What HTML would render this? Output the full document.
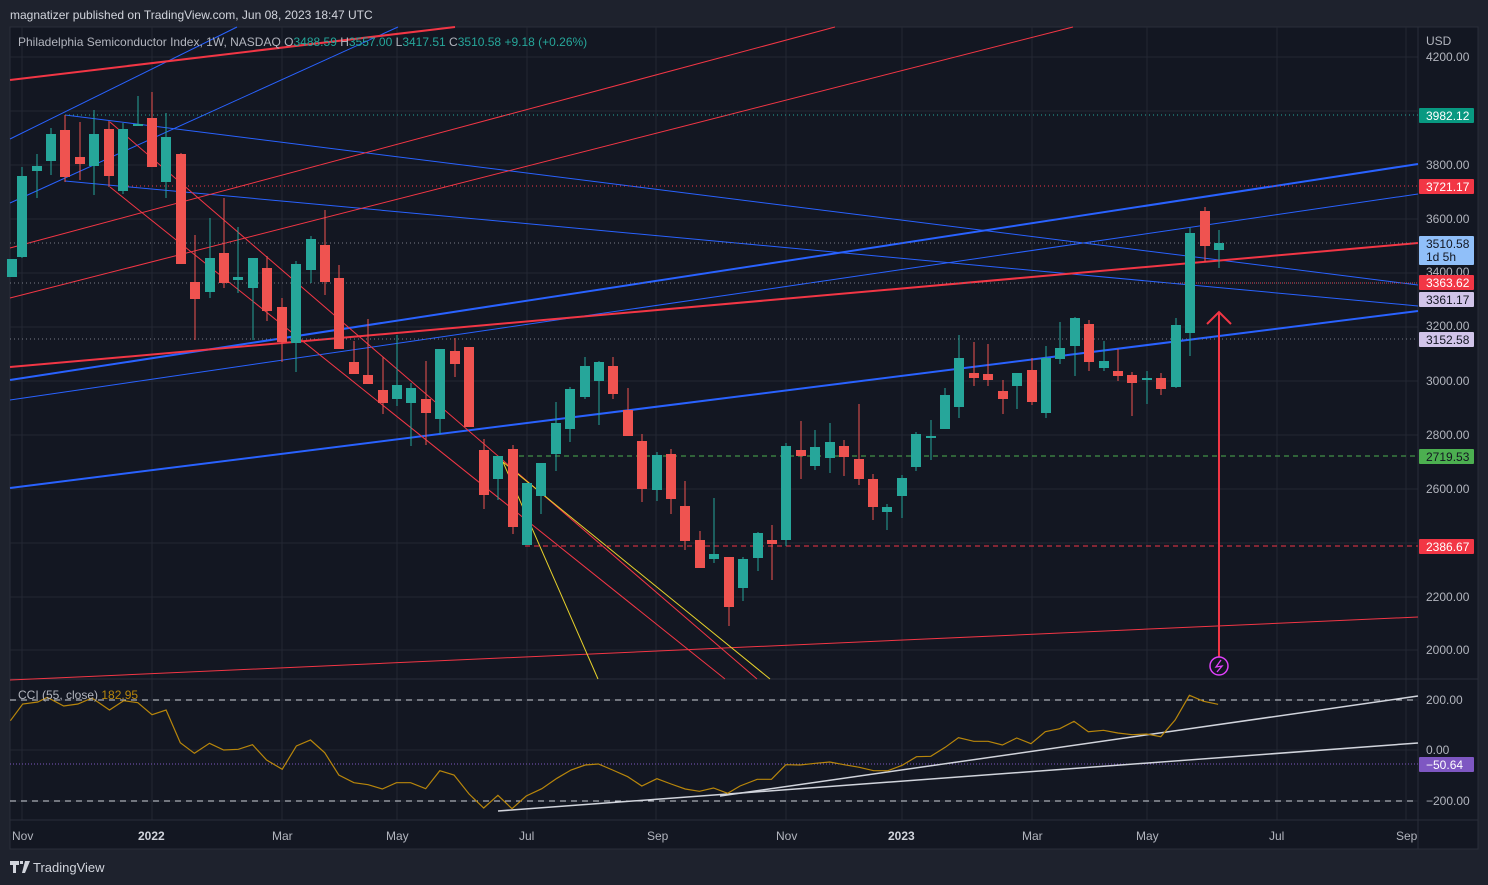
<!DOCTYPE html>
<html><head><meta charset="utf-8"><style>
html,body{margin:0;padding:0;background:#1e222d;width:1488px;height:885px;overflow:hidden;font-family:"Liberation Sans",sans-serif}
svg{position:absolute;left:0;top:0}
</style></head><body>
<svg id="s" width="1488" height="885" xmlns="http://www.w3.org/2000/svg" font-family="Liberation Sans, sans-serif">
<rect x="0" y="0" width="1488" height="885" fill="#1e222d"/>
<text x="10" y="19" fill="#d1d4dc" font-size="12">magnatizer published on TradingView.com, Jun 08, 2023 18:47 UTC</text>
<rect x="10" y="27" width="1468" height="822" fill="#131722" stroke="#2a2e39"/>
<g id="grid" stroke="#232733" stroke-width="1"></g>
<line x1="1418" y1="27" x2="1418" y2="849" stroke="#2a2e39"/>
<line x1="10" y1="679" x2="1478" y2="679" stroke="#2a2e39"/>
<line x1="10" y1="820" x2="1478" y2="820" stroke="#2a2e39"/>
<g id="lines" fill="none"></g>
<g id="candles"></g>
<g id="cci" fill="none"></g>
<g id="labels" font-size="12"></g>
<text x="18" y="46" fill="#b2b5be" font-size="12">Philadelphia Semiconductor Index, 1W, NASDAQ <tspan fill="#b2b5be">O</tspan><tspan fill="#26a69a">3488.59</tspan> <tspan fill="#b2b5be">H</tspan><tspan fill="#26a69a">3557.00</tspan> <tspan fill="#b2b5be">L</tspan><tspan fill="#26a69a">3417.51</tspan> <tspan fill="#b2b5be">C</tspan><tspan fill="#26a69a">3510.58</tspan> <tspan fill="#26a69a">+9.18 (+0.26%)</tspan></text>
<text x="18" y="699" fill="#b2b5be" font-size="12">CCI (55, close) <tspan fill="#b8860b">182.95</tspan></text>
<g transform="translate(10,860)" fill="#d1d4dc"><path d="M0 1h9v4H6v8H3V5H0z M10 1h3v3h-3z M15 1h5l-5 12h-3z"/></g>
<text x="33" y="872" fill="#d1d4dc" font-size="13">TradingView</text>
</svg>
<script>
var NS="http://www.w3.org/2000/svg";
function el(p,t,a){var e=document.createElementNS(NS,t);for(var k in a)e.setAttribute(k,a[k]);document.getElementById(p).appendChild(e);return e;}
[57,111,165,219,273,327,381,435,489,543,597,650,700,750,801].forEach(function(y){el('grid','line',{x1:10,y1:y,x2:1418,y2:y});});
[22,152,282,397,527,656,786,902,1032,1147,1277,1406].forEach(function(x){el('grid','line',{x1:x,y1:27,x2:x,y2:820});});
function L(x1,y1,x2,y2,c,w,d){var a={x1:x1,y1:y1,x2:x2,y2:y2,stroke:c,'stroke-width':w};if(d)a['stroke-dasharray']=d;el('lines','line',a);}
var B="#2962ff",R="#f23645";
L(10,488,1418,311,B,2);L(10,380,1418,164,B,2);L(10,400,1418,194,B,1);
L(10,139,237,27,B,1);L(10,203,398,27,B,1);
L(65,115,1418,285,B,1);L(65,181,1418,306,B,1);
L(10,367,1418,243,R,2);L(10,80,455,27,R,2);
L(10,248,835,27,R,1);L(10,298,1073,27,R,1);L(10,680,1418,617,R,1);
L(110,122,757,679,R,1);L(110,187,725,679,R,1);
L(503,462,770,679,"#e8d22b",1);L(503,462,598,679,"#e8d22b",1);
L(65,115,1418,115,"#26a69a",1,"1 3");L(120,186,1418,186,R,1,"1 3");
L(10,243,1418,243,"#787b86",1,"1 3");L(10,283,1418,283,"#787b86",1,"1 3");L(1180,283,1418,283,R,1,"1 3");L(10,339,1418,339,"#787b86",1,"1 3");
L(510,456,1418,456,"#4caf50",1,"5 4");L(525,546,1418,546,R,1,"5 4");
L(1219,313,1219,657,"#f23645",2);
el('lines','path',{d:"M1207 324 L1219 312 L1231 324",stroke:"#f23645","stroke-width":2});
el('lines','circle',{cx:1219,cy:666,r:9,stroke:"#e040fb","stroke-width":1.5});
el('lines','path',{d:"M1221 660 L1216 667 L1222 666 L1217 672",stroke:"#e040fb","stroke-width":1.3});
var C=[[12,259,277,259,277,1],[22,176,257,167,258,1],[37,166,171,154,198,1],[51,134,161,128,175,1],[65,130,177,115,182,0],[80,157,164,122,180,0],[94,134,166,110,195,1],[109,129,176,121,187,0],[123,129,191,123,194,1],[138,124,126,96,126,1],[152,118,167,92,167,0],[166,137,182,113,198,1],[181,154,264,153,264,0],[195,282,299,235,340,0],[210,258,292,218,298,1],[224,253,283,198,288,0],[238,277,280,227,293,1],[253,258,288,258,340,1],[267,268,311,256,321,0],[282,307,342,298,362,0],[296,264,343,261,372,1],[311,239,270,236,283,1],[325,245,282,210,295,0],[339,278,349,265,349,0],[354,362,374,341,374,0],[368,375,384,319,384,0],[383,390,403,357,414,0],[397,385,399,335,406,1],[411,388,403,383,446,1],[426,399,413,361,445,0],[440,349,419,349,434,1],[455,351,364,338,377,0],[469,347,427,347,427,0],[484,450,495,439,509,0],[498,456,479,456,500,1],[513,449,527,445,534,0],[527,483,545,483,545,1],[541,463,496,463,514,1],[556,423,454,402,471,1],[570,389,429,387,442,1],[585,366,397,357,399,1],[599,362,381,361,425,1],[613,366,394,357,399,0],[628,410,436,388,436,0],[642,441,489,434,502,0],[657,455,490,452,501,1],[671,454,499,449,514,0],[685,506,541,481,550,0],[700,540,568,531,568,0],[714,554,559,498,563,1],[729,557,607,557,626,0],[743,559,588,557,601,1],[758,533,558,532,571,1],[772,540,544,525,580,0],[786,446,540,443,546,1],[801,450,456,421,479,0],[815,447,466,430,470,1],[830,442,458,423,473,1],[844,446,457,440,476,0],[859,459,479,404,485,0],[873,479,507,474,520,0],[887,507,512,504,530,1],[902,478,496,475,518,1],[916,434,467,432,471,1],[931,436,438,420,460,1],[945,395,429,388,429,1],[959,358,407,335,418,1],[974,373,378,342,386,0],[988,374,380,344,386,0],[1003,391,399,380,414,0],[1017,373,386,373,409,1],[1032,370,402,358,405,0],[1046,358,413,346,418,1],[1060,348,359,322,364,1],[1075,318,346,317,376,1],[1089,324,362,320,371,0],[1104,361,368,341,371,1],[1118,371,376,349,381,0],[1132,375,383,372,416,0],[1147,378,379,371,404,1],[1161,378,389,373,395,0],[1176,325,387,318,388,1],[1190,233,333,228,356,1],[1205,211,246,207,262,0],[1219,243,250,230,268,1]];
C.forEach(function(c){var col=c[5]?"#26a69a":"#ef5350";
el('candles','line',{x1:c[0],y1:c[3],x2:c[0],y2:c[4],stroke:col,'stroke-width':1});
var h=Math.max(2,c[2]-c[1]);el('candles','rect',{x:c[0]-5,y:c[1],width:10,height:h,fill:col});});
L(10,700,1418,700,"#d1d4dc",1,"6 5");L(10,801,1418,801,"#d1d4dc",1,"6 5");L(10,764,1418,764,"#7e57c2",1,"1 2");
var p1=[[22,122],[48,72],[80,66],[100,52],[135,78],[165,72],[195,54],[232,90],[262,62],[292,68],[322,104],[352,90],[382,188],[412,220],[444,190],[474,210],[505,208],[535,194],[565,240],[598,268],[628,198],[658,180],[688,218],[718,285],[750,308],[780,314],[810,327],[840,308],[870,308],[902,326],[932,272],[962,285],[994,342],[1025,384],[1055,346],[1085,386],[1115,348],[1148,326],[1180,295],[1210,270],[1240,255],[1268,252],[1298,270],[1330,290],[1360,318],[1392,296],[1422,312],[1452,327],[1482,334],[1512,324],[1542,340]];
var p2=[[0,318],[36,298],[66,298],[96,254],[126,255],[158,250],[188,246],[218,254],[250,262],[280,272],[310,272],[340,256],[370,230],[400,229],[430,202],[458,173],[490,184],[520,184],[550,195],[580,174],[610,191],[640,155],[670,146],[700,124],[730,155],[762,151],[792,159],[822,164],[852,162],[882,170],[912,120],[942,46],[972,64],[1002,73]];
var pts=p1.map(function(p){return (p[0]/2.119).toFixed(1)+","+(680+p[1]/3).toFixed(1);}).concat(p2.map(function(p){return (740+p[0]/2.096).toFixed(1)+","+(680+p[1]/3).toFixed(1);}));
el('cci','polyline',{points:pts.join(" "),stroke:"#b8860b","stroke-width":1.2});
L(498,811,1418,743,"#d1d4dc",1.5);L(720,796,1418,696,"#d1d4dc",1.5);
function T(x,y,t,c,a,w){var e=el('labels','text',{x:x,y:y,fill:c,'text-anchor':a||'start'});if(w)e.setAttribute('font-weight',w);e.textContent=t;}
T(1426,45,"USD","#b2b5be");
[["4200.00",61],["3800.00",169],["3600.00",223],["3400.00",276],["3200.00",330],["3000.00",385],["2800.00",439],["2600.00",493],["2200.00",601],["2000.00",654],["200.00",704],["0.00",754],["−200.00",805]].forEach(function(a){T(1426,a[1],a[0],"#b2b5be");});
function Lab(y,h,bg,t,c,t2){el('labels','rect',{x:1419,y:y,width:55,height:h,fill:bg,rx:1});T(1426,y+12,t,c);if(t2)T(1426,y+25,t2,c);}
Lab(108,15,"#089981","3982.12","#fff");Lab(179,15,"#f23645","3721.17","#fff");Lab(236,29,"#90bff9","3510.58","#131722","1d 5h");
Lab(275,15,"#f23645","3363.62","#fff");Lab(292,15,"#d1c4e9","3361.17","#131722");Lab(332,15,"#d1c4e9","3152.58","#131722");
Lab(449,15,"#4caf50","2719.53","#131722");Lab(539,15,"#f23645","2386.67","#fff");Lab(757,15,"#7e57c2","−50.64","#fff");
[["Nov",12],["Mar",272],["May",386],["Jul",519],["Sep",647],["Nov",776],["Mar",1022],["May",1136],["Jul",1269],["Sep",1396]].forEach(function(a){T(a[1],840,a[0],"#b2b5be");});
T(138,840,"2022","#d1d4dc","start","bold");T(888,840,"2023","#d1d4dc","start","bold");
</script>
</body></html>
